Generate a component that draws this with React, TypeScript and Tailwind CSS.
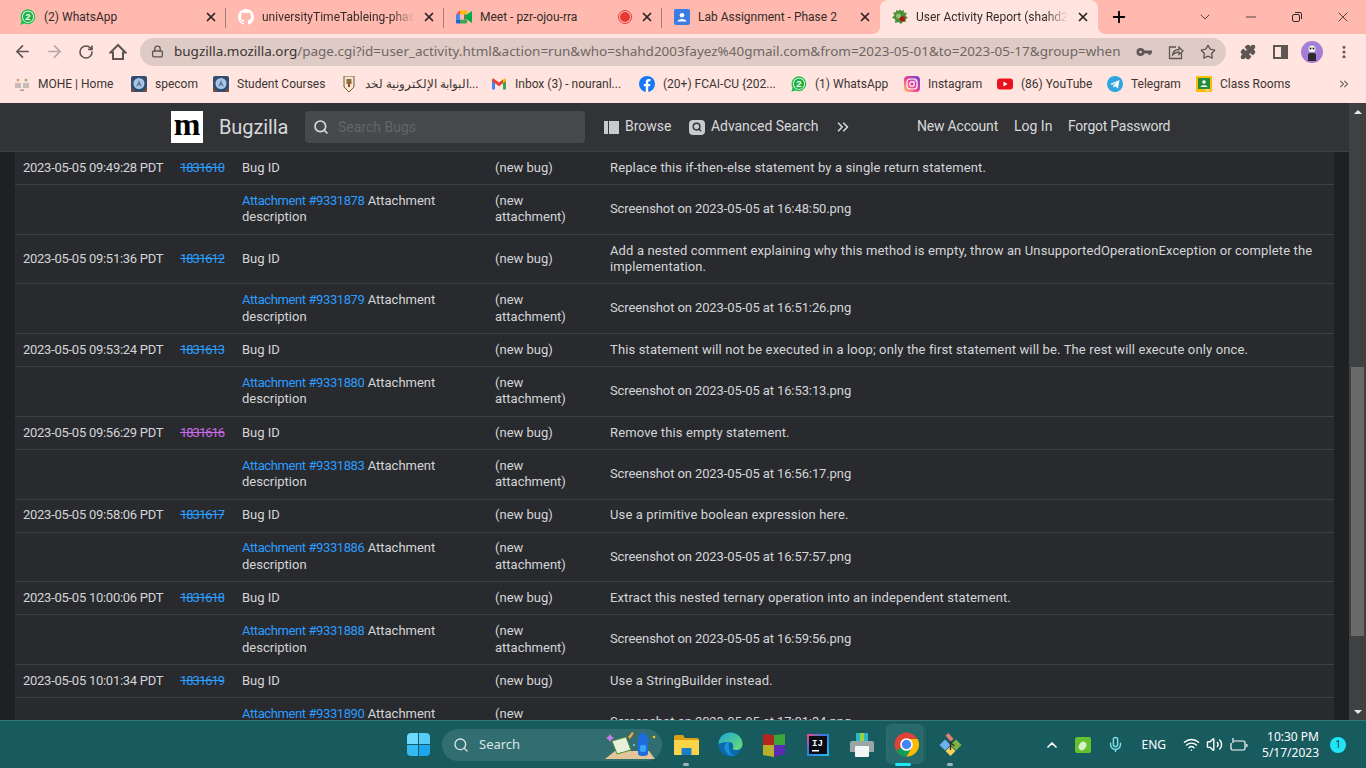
import {
  ArrowLeft,
  ArrowRight,
  ChevronDown,
  ChevronUp,
  ChevronsRight,
  EllipsisVertical,
  Lock,
  Mic,
  Minus,
  Plus,
  Puzzle,
  RotateCw,
  Search,
  Star,
  Volume2,
  Wifi,
  X,
} from "lucide-react";

type Row = {
  when: string;
  bug: string;
  visited?: boolean;
  summary: string;
  attachment: string;
  file: string;
};

const rows: Row[] = [
  { when: "2023-05-05 09:49:28 PDT", bug: "1831610", summary: "Replace this if-then-else statement by a single return statement.", attachment: "9331878", file: "Screenshot on 2023-05-05 at 16:48:50.png" },
  { when: "2023-05-05 09:51:36 PDT", bug: "1831612", summary: "Add a nested comment explaining why this method is empty, throw an UnsupportedOperationException or complete the implementation.", attachment: "9331879", file: "Screenshot on 2023-05-05 at 16:51:26.png" },
  { when: "2023-05-05 09:53:24 PDT", bug: "1831613", summary: "This statement will not be executed in a loop; only the first statement will be. The rest will execute only once.", attachment: "9331880", file: "Screenshot on 2023-05-05 at 16:53:13.png" },
  { when: "2023-05-05 09:56:29 PDT", bug: "1831616", visited: true, summary: "Remove this empty statement.", attachment: "9331883", file: "Screenshot on 2023-05-05 at 16:56:17.png" },
  { when: "2023-05-05 09:58:06 PDT", bug: "1831617", summary: "Use a primitive boolean expression here.", attachment: "9331886", file: "Screenshot on 2023-05-05 at 16:57:57.png" },
  { when: "2023-05-05 10:00:06 PDT", bug: "1831618", summary: "Extract this nested ternary operation into an independent statement.", attachment: "9331888", file: "Screenshot on 2023-05-05 at 16:59:56.png" },
  { when: "2023-05-05 10:01:34 PDT", bug: "1831619", summary: "Use a StringBuilder instead.", attachment: "9331890", file: "Screenshot on 2023-05-05 at 17:01:34.png" },
];

/* ---- favicons ---- */

function WhatsAppIcon() {
  return (
    <svg width="16" height="16" viewBox="0 0 16 16" className="shrink-0">
      <path d="M8 .3a7.500 7.500 0 0 0-6.500 11.200L.4 15.700l4.200-1.100A7.500 7.500 0 1 0 8 .3z" fill="#25c04f" />
      <circle cx="8" cy="7.800" r="6" fill="#fff" />
      <circle cx="8" cy="7.800" r="5.200" fill="#1fb141" />
      <text x="8" y="11.200" textAnchor="middle" fontSize="9.500" fontWeight="700" fill="#fff" fontFamily="Liberation Sans">2</text>
    </svg>
  );
}

function GitHubIcon() {
  return (
    <svg width="16" height="16" viewBox="0 0 16 16" fill="#fff" className="shrink-0">
      <path d="M8 0C3.58 0 0 3.58 0 8c0 3.54 2.29 6.53 5.47 7.59.4.07.55-.17.55-.38 0-.19-.01-.82-.01-1.49-2.01.37-2.53-.49-2.69-.94-.09-.23-.48-.94-.82-1.13-.28-.15-.68-.52-.01-.53.63-.01 1.08.58 1.23.82.72 1.21 1.87.87 2.33.66.07-.52.28-.87.51-1.07-1.78-.2-3.64-.89-3.64-3.95 0-.87.31-1.59.82-2.15-.08-.2-.36-1.02.08-2.12 0 0 .67-.21 2.2.82.64-.18 1.32-.27 2-.27s1.36.09 2 .27c1.53-1.04 2.2-.82 2.2-.82.44 1.1.16 1.92.08 2.12.51.56.82 1.27.82 2.15 0 3.07-1.87 3.75-3.65 3.95.29.25.54.73.54 1.48 0 1.07-.01 1.93-.01 2.2 0 .21.15.46.55.38A8.01 8.01 0 0 0 16 8c0-4.42-3.58-8-8-8z" />
    </svg>
  );
}

function MeetIcon() {
  return (
    <svg width="16" height="16" viewBox="0 0 16 16" className="shrink-0">
      <path d="M0 5.500l4-4v4z" fill="#ea4335" />
      <rect x="0" y="5.500" width="4" height="5" fill="#4285f4" />
      <path d="M0 10.500h4v4H1a1 1 0 0 1-1-1z" fill="#1967d2" />
      <path d="M4 1.500h6a1 1 0 0 1 1 1v3H4z" fill="#fbbc04" />
      <path d="M4 10.500h7v3a1 1 0 0 1-1 1H4z" fill="#34a853" />
      <path d="M11 5.500L16 2v12l-5-3.500z" fill="#00ac47" />
      <rect x="4" y="5.500" width="7" height="5" fill="#ffb9af" />
      <path d="M8 5.500h3v5H8z" fill="#188038" opacity=".8" />
    </svg>
  );
}

function ClassroomIcon() {
  return (
    <svg width="16" height="16" viewBox="0 0 16 16" className="shrink-0">
      <rect width="16" height="16" rx="1" fill="#fbbc04" />
      <rect x="2" y="2" width="12" height="11" fill="#1e8e3e" />
      <circle cx="8" cy="6" r="1.800" fill="#fff" />
      <path d="M4.500 11c.5-2.500 6.500-2.500 7 0z" fill="#fff" />
      <rect x="9.500" y="13.500" width="4" height="1" fill="#fff" />
    </svg>
  );
}

function LabIcon() {
  return (
    <svg width="16" height="16" viewBox="0 0 16 16" className="shrink-0">
      <rect width="16" height="16" rx="2" fill="#3b7ce4" />
      <circle cx="8" cy="6.300" r="2.300" fill="#fff" />
      <path d="M3.500 12.500c.4-3.400 8.600-3.400 9 0z" fill="#fff" />
    </svg>
  );
}

function BugIcon() {
  return (
    <svg width="16" height="16" viewBox="0 0 16 16" className="shrink-0">
      <path d="M8 0l1.300 2L12 1l-.3 2.500L15 4l-1.500 2.500L16 9l-2.500 1 .5 3-3-.3L9 15 6.500 13 3 14l.3-3.500L0 8.500l2.500-2L1 3.500l3-.2L4.500 1 7 2z" fill="#4e8f3a" />
      <circle cx="6.500" cy="7" r="2.500" fill="#8fc46e" />
      <path d="M7.500 10a3 3 0 0 1 5-2c1.500 1.500.5 4-1.500 4.500-2 .5-3.500-1-3.500-2.500z" fill="#b3121d" />
    </svg>
  );
}

function MoheIcon() {
  return (
    <svg width="16" height="16" viewBox="0 0 16 16" className="shrink-0">
      <circle cx="4" cy="4" r="1.500" fill="#d9a273" />
      <circle cx="12" cy="4" r="1.500" fill="#9bb58f" />
      <rect x="1" y="7" width="6" height="5" fill="#c7bcb8" />
      <rect x="9" y="7" width="6" height="5" fill="#c7bcb8" />
      <rect x="6" y="13.500" width="4" height="1.500" fill="#a89c98" />
    </svg>
  );
}

function CuIcon() {
  return (
    <svg width="16" height="16" viewBox="0 0 16 16" className="shrink-0">
      <rect width="16" height="16" rx="2" fill="#314d70" />
      <circle cx="8" cy="7.500" r="5.500" fill="#a9c7e4" />
      <path d="M5 11l3-7 3 7-3-2z" fill="#5d7da0" />
      <path d="M0 11l4 5H0zM16 11l-4 5h4z" fill="#8a4b32" />
    </svg>
  );
}

function CrestIcon() {
  return (
    <svg width="16" height="16" viewBox="0 0 16 16" className="shrink-0">
      <path d="M3 0h10v11l-5 5-5-5z" fill="#f2e8d0" stroke="#6b5b3a" />
      <rect x="5.500" y="3" width="5" height="5" fill="#8a6d3b" />
      <rect x="7" y="8" width="2" height="3" fill="#b2342a" />
    </svg>
  );
}

function GmailIcon() {
  return (
    <svg width="16" height="16" viewBox="0 0 16 16" className="shrink-0">
      <path d="M1 13.500V4l3 2v7.500H2a1 1 0 0 1-1-1z" fill="#4285f4" />
      <path d="M15 13.500V4l-3 2v7.500h2a1 1 0 0 0 1-1z" fill="#34a853" />
      <path d="M1 4c0-1.200 1.300-1.800 2.200-1.100L8 6.500l4-3v3.800L8 10.300 1 5z" fill="#ea4335" />
      <path d="M12 3.500l.8-.6C13.700 2.200 15 2.800 15 4v1l-3 2.300z" fill="#fbbc04" />
    </svg>
  );
}

function FacebookIcon() {
  return (
    <svg width="16" height="16" viewBox="0 0 16 16" className="shrink-0">
      <circle cx="8" cy="8" r="8" fill="#1877f2" />
      <path d="M11 10.200l.4-2.300H9.200V6.400c0-.6.300-1.200 1.300-1.200h1V3.200s-.9-.2-1.800-.2C7.900 3 6.800 4.100 6.800 6v1.900h-2v2.300h2V16h2.400v-5.800z" fill="#fff" />
    </svg>
  );
}

function InstagramIcon() {
  return (
    <svg width="16" height="16" viewBox="0 0 16 16" className="shrink-0">
      <defs>
        <linearGradient id="ig" x1="0" y1="1" x2="1" y2="0">
          <stop offset="0" stopColor="#feda75" />
          <stop offset=".4" stopColor="#f5468a" />
          <stop offset="1" stopColor="#7b3bd6" />
        </linearGradient>
      </defs>
      <rect width="16" height="16" rx="4" fill="url(#ig)" />
      <rect x="3" y="3" width="10" height="10" rx="3" fill="none" stroke="#fff" strokeWidth="1.200" />
      <circle cx="8" cy="8" r="2.300" fill="none" stroke="#fff" strokeWidth="1.200" />
      <circle cx="11" cy="5" r=".7" fill="#fff" />
    </svg>
  );
}

function YouTubeIcon() {
  return (
    <svg width="16" height="16" viewBox="0 0 16 16" className="shrink-0">
      <rect y="2.500" width="16" height="11" rx="3" fill="#e8121a" />
      <path d="M6.500 5.500v5l4-2.500z" fill="#fff" />
    </svg>
  );
}

function TelegramIcon() {
  return (
    <svg width="16" height="16" viewBox="0 0 16 16" className="shrink-0">
      <circle cx="8" cy="8" r="8" fill="#2ca5e0" />
      <path d="M3 8l9.500-4-1.500 8.500-3-2.200-1.500 1.500-.3-2.500 4.300-3.800-5.300 3.300z" fill="#fff" />
    </svg>
  );
}

/* ---- chrome ---- */

function Tab({
  icon,
  title,
  extra,
  fade,
  active,
  divider,
}: {
  icon: React.ReactNode;
  title: string;
  extra?: React.ReactNode;
  fade?: boolean;
  active?: boolean;
  divider?: boolean;
}) {
  return (
    <div className={`relative flex h-[34px] w-[218px] shrink-0 items-center gap-2 pr-2 pl-3 ${active ? "rounded-t-lg bg-[#ffe4df]" : ""}`}>
      {active && (
        <>
          <div className="absolute bottom-0 left-[-8px] h-2 w-2 bg-[radial-gradient(circle_at_0_0,transparent_8px,#ffe4df_8px)]" />
          <div className="absolute right-[-8px] bottom-0 h-2 w-2 bg-[radial-gradient(circle_at_100%_0,transparent_8px,#ffe4df_8px)]" />
        </>
      )}
      {icon}
      <span className={`min-w-0 flex-1 overflow-hidden text-[12px] whitespace-nowrap text-[#352c2a] ${fade ? "[mask-image:linear-gradient(to_right,#000_85%,transparent)]" : ""}`}>
        {title}
      </span>
      {extra}
      <X size={14} strokeWidth={3} className="shrink-0 text-[#2a2523]" />
      {divider && <div className="absolute top-[8px] right-0 h-[20px] w-px bg-[#9c7f79]" />}
    </div>
  );
}

function ToolbarSlot({ children }: { children: React.ReactNode }) {
  return <div className="flex h-8 w-8 shrink-0 items-center justify-center">{children}</div>;
}

function Bookmark({ icon, label, width }: { icon: React.ReactNode; label: string; width: string }) {
  return (
    <div className={`flex shrink-0 items-center gap-2 whitespace-nowrap ${width}`}>
      {icon}
      <span className="text-[12px] text-[#3b3533]">{label}</span>
    </div>
  );
}

function ActivityRow({ row }: { row: Row }) {
  const grid = "grid grid-cols-[157px_62px_253px_115px_1fr] items-center border-b border-[#3e3f42] pt-[7.75px] pb-[7.875px]";
  return (
    <>
      <div className={grid}>
        <div className="pl-2 whitespace-nowrap tracking-[-0.27px]">{row.when}</div>
        <div className={`pl-2 tracking-[-1px] line-through ${row.visited ? "text-[#c86be6]" : "text-[#2a9dff]"}`}>{row.bug}</div>
        <div className="pl-2">Bug ID</div>
        <div className="pl-2">(new bug)</div>
        <div className="px-2 tracking-[0.13px]">{row.summary}</div>
      </div>
      <div className={grid}>
        <div />
        <div />
        <div className="px-2">
          <span className="tracking-[-0.4px] text-[#2a9dff]">Attachment #{row.attachment}</span> Attachment description
        </div>
        <div className="pr-8 pl-2">(new attachment)</div>
        <div className="px-2 tracking-[-0.1px]">{row.file}</div>
      </div>
    </>
  );
}

function Scrollbar() {
  return (
    <div className="relative flex w-[17px] shrink-0 flex-col bg-[#3f4041]">
      <div className="flex h-[17px] items-center justify-center">
        <div className="border-x-[4px] border-b-[4px] border-x-transparent border-b-[#e8e8e8]" />
      </div>
      <div className="mx-[2px] mt-[247px] h-[269px] bg-[#6a6a6b]" />
      <div className="absolute right-0 bottom-0 left-0 flex h-[17px] items-center justify-center">
        <div className="border-x-[4px] border-t-[4px] border-x-transparent border-t-[#e8e8e8]" />
      </div>
    </div>
  );
}

function TaskSlot({ children, dot, active }: { children: React.ReactNode; dot?: boolean; active?: boolean }) {
  return (
    <div className="relative flex h-12 w-[44px] shrink-0 items-center justify-center">
      {active && (
        <>
          <div className="absolute top-[3px] left-[5px] h-[40px] w-[37px] rounded-md bg-[#21625f]" />
          <div className="absolute top-[3px] left-[2px] h-[40px] w-[37px] rounded-md border border-[#2f6f72] bg-[#28696c]" />
        </>
      )}
      <div className="relative">{children}</div>
      {dot && <div className="absolute bottom-[3px] h-[3px] w-[6px] rounded-full bg-[#9fb4b6]" />}
      {active && <div className="absolute bottom-[3px] left-[11px] h-[3px] w-[16px] rounded-full bg-[#20e5f5]" />}
    </div>
  );
}

function Taskbar() {
  return (
    <div className="relative flex h-12 shrink-0 items-center border-t border-[#33787b] bg-[#185b5e] pl-[396px] font-['Noto_Sans',sans-serif]">
      <TaskSlot>
        <div className="grid h-[23px] w-[23px] grid-cols-2 gap-px">
          <div className="rounded-tl-sm bg-[#6fd9fb]" />
          <div className="rounded-tr-sm bg-[#55cdf8]" />
          <div className="rounded-bl-sm bg-[#35bbf3]" />
          <div className="rounded-br-sm bg-[#1da6ee]" />
        </div>
      </TaskSlot>
      <div className="relative ml-[2px] flex h-8 w-[220px] shrink-0 items-center rounded-full bg-[#326e71] pl-[11px] text-[13px] text-[#d8e6e6]">
        <Search size={16} className="mr-[10px]" />
        Search
        <svg width="56" height="32" viewBox="0 0 56 32" className="absolute top-0 right-[2px]">
          <path d="M1 30l10-8h34l6 8z" fill="#e3c698" />
          <path d="M8 12l14-4 5 13-14 4z" fill="#e8f0dc" stroke="#4f8f3a" />
          <path d="M24 8l4-5 2 1-4 6z" fill="#f2a33a" />
          <path d="M6 5l1.500 2.500L10 9l-2.500 1.500L6 13l-1.500-2.500L2 9l2.500-1.500z" fill="#c77df0" />
          <path d="M34 24V12c0-4 2-7 5-9 3 2 5 5 5 9v12c0 2-1 3-5 3s-5-1-5-3z" fill="#1f6be0" />
          <rect x="36" y="16" width="6" height="7" rx="2" fill="#37a6f5" />
          <circle cx="50" cy="8" r="1.300" fill="#f5c518" />
          <circle cx="30" cy="16" r="1" fill="#6fd9fb" />
        </svg>
      </div>
      <div className="ml-[2px] flex items-center">
        <TaskSlot dot>
          <svg width="25" height="25" viewBox="0 0 25 25"><path d="M0 5a2 2 0 0 1 2-2h7l2 3h12a2 2 0 0 1 2 2v15H0z" fill="#d9a017" /><path d="M0 8h25v14a1 1 0 0 1-1 1H1a1 1 0 0 1-1-1z" fill="#fbd44a" /><rect x="7.500" y="16" width="10" height="7" rx="1" fill="#1c7fc6" /></svg>
        </TaskSlot>
        <TaskSlot>
          <svg width="25" height="25" viewBox="0 0 25 25">
            <defs>
              <linearGradient id="edge" x1="0" y1="0" x2="1" y2="1"><stop offset="0" stopColor="#1ca7d8" /><stop offset="1" stopColor="#6ee06a" /></linearGradient>
            </defs>
            <circle cx="12.500" cy="12.500" r="12" fill="#0b69b0" />
            <path d="M.5 12C1 4 7 .5 12.500.5 19 .5 24.500 5.500 24.500 12c0 4-3.500 6-6.500 6-2 0-3.500-1-3.500-1.500 2-2 .5-6.500-3.500-6.500C6 10 1.500 11 .5 12z" fill="url(#edge)" />
            <path d="M11 10c-4 0-6 4-3.500 9 2 4 6 5.500 9.500 5-5-1-7-7-6-14z" fill="#1992d4" />
          </svg>
        </TaskSlot>
        <TaskSlot>
          <svg width="24" height="26" viewBox="0 0 24 26"><path d="M1 2l11 1v10H1z" fill="#b3261e" /><path d="M12 3l11-1v11H12z" fill="#3ba53b" /><path d="M1 13h11v12l-11-2z" fill="#b9b02a" /><path d="M12 13h11v9l-11 3z" fill="#5b2bb5" /></svg>
        </TaskSlot>
        <TaskSlot>
          <svg width="22" height="22" viewBox="0 0 22 22">
            <defs>
              <linearGradient id="ij" x1="0" y1="0" x2="1" y2="1"><stop offset="0" stopColor="#f0478c" /><stop offset=".4" stopColor="#2f7be0" /><stop offset="1" stopColor="#27b7f0" /></linearGradient>
            </defs>
            <rect x="1" y="1" width="20" height="20" fill="#0b0b14" stroke="url(#ij)" strokeWidth="2" />
            <rect x="5" y="16" width="7" height="1.500" fill="#fff" />
            <text x="5" y="12" fontSize="9" fontWeight="700" fill="#fff" fontFamily="Liberation Mono">IJ</text>
          </svg>
        </TaskSlot>
        <TaskSlot>
          <svg width="26" height="26" viewBox="0 0 26 26"><rect x="7" y="1" width="12" height="8" fill="#2ab6c9" /><rect x="11" y="1" width="4" height="8" fill="#9fcf3a" /><path d="M1 11a2 2 0 0 1 2-2h20a2 2 0 0 1 2 2v9H1z" fill="#9aa5a8" /><rect x="6" y="14" width="14" height="11" rx="1" fill="#f4f6f6" /></svg>
        </TaskSlot>
        <TaskSlot active>
          <svg width="25" height="25" viewBox="0 0 25 25"><circle cx="12.500" cy="12.500" r="12" fill="#db4437" /><path d="M12.500 12.500L2.100 18.500A12 12 0 0 0 12.500 24.500l4-6z" fill="#0f9d58" /><path d="M12.500 7h11.200a12 12 0 0 1-11.200 17.500l5-8z" fill="#fbbc04" /><circle cx="12.500" cy="12.500" r="5.500" fill="#4285f4" stroke="#fff" strokeWidth="1.600" /></svg>
        </TaskSlot>
        <TaskSlot dot>
          <svg width="25" height="25" viewBox="0 0 25 25">
            <path d="M7 7.500l5.500 5.500L7 18.500 1.500 13z" fill="#6ab0f3" />
            <path d="M7.500 3.500l3-2.500 5 6-3 2.500z" fill="#e87d6e" />
            <path d="M18 7.500l5.500 5.500-5.500 5.500-5.500-5.500z" fill="#7cb342" />
            <path d="M12.500 14l5 5-5 5-5-5z" fill="#f2d15c" />
            <path d="M12.500 9v9M12.500 11l4 3" stroke="#3a2f2d" strokeWidth="1.400" fill="none" />
          </svg>
        </TaskSlot>
      </div>
      <div className="ml-auto flex items-center text-white">
        <ChevronUp size={16} strokeWidth={2.5} />
        <svg width="16" height="16" viewBox="0 0 16 16" className="ml-[15px]"><rect width="16" height="16" rx="2" fill="#63c22e" /><ellipse cx="7.500" cy="9" rx="3.500" ry="4.500" transform="rotate(35 7.500 9)" fill="#dbeecb" /></svg>
        <Mic size={17} className="ml-[16px] text-[#7ee0e8]" />
        <span className="ml-[17px] text-[12px]">ENG</span>
        <Wifi size={17} className="ml-[17px]" />
        <Volume2 size={17} className="ml-[6px]" />
        <svg width="18" height="16" viewBox="0 0 18 16" fill="none" stroke="#fff" strokeWidth="1.200" className="ml-[7px]"><path d="M4 4h9.500A1.500 1.500 0 0 1 15 5.500v6a1.500 1.500 0 0 1-1.500 1.500h-11A1.500 1.500 0 0 1 1 11.500V6" /><path d="M16.800 7v3" /><path d="M3 1v5" /></svg>
        <div className="ml-[14px] text-right text-[12px] leading-[16px]">
          <div>10:30 PM</div>
          <div>5/17/2023</div>
        </div>
        <div className="mr-[20px] ml-[11px] flex h-4 w-4 items-center justify-center rounded-full bg-[#20e5f5] text-[10px] text-[#10343a]">1</div>
      </div>
    </div>
  );
}

export default function App() {
  return (
    <div className="flex h-screen w-[1366px] flex-col overflow-hidden bg-[#1f2022] font-['Roboto',sans-serif]">
      {/* tab strip */}
      <div className="flex h-[34px] shrink-0 items-center bg-[#ffb9af] pl-2">
        <Tab icon={<WhatsAppIcon />} title="(2) WhatsApp" divider />
        <Tab icon={<GitHubIcon />} title="universityTimeTableing-phase" fade divider />
        <Tab icon={<MeetIcon />} title="Meet - pzr-ojou-rra" divider extra={<span className="flex h-3.5 w-3.5 shrink-0 items-center justify-center rounded-full border border-[#e53935]"><span className="h-2.5 w-2.5 rounded-full bg-[#e53935]" /></span>} />
        <Tab icon={<LabIcon />} title="Lab Assignment - Phase 2" />
        <Tab active icon={<BugIcon />} title="User Activity Report (shahd2003" fade />
        <Plus size={18} strokeWidth={2.5} className="ml-3 text-black" />
        <div className="ml-[69px] flex items-center gap-[30px] text-[#332d2b]">
          <ChevronDown size={16} strokeWidth={1.25} />
          <Minus size={16} strokeWidth={1.25} />
          <svg width="16" height="16" viewBox="0 0 16 16" fill="none" stroke="currentColor"><rect x="3.500" y="5.500" width="7" height="7" rx="1.500" /><path d="M6 3.500h5a1.500 1.500 0 0 1 1.500 1.500v5" /></svg>
          <X size={16} strokeWidth={1.25} />
        </div>
      </div>

      {/* toolbar */}
      <div className="flex h-[35px] shrink-0 items-center bg-[#ffe4df] pl-[6px] text-[#5f5654]">
        <ToolbarSlot><ArrowLeft size={19} strokeWidth={2.2} /></ToolbarSlot>
        <ToolbarSlot><ArrowRight size={19} strokeWidth={2.2} className="text-[#b5a8a5]" /></ToolbarSlot>
        <ToolbarSlot><RotateCw size={16} strokeWidth={2.4} /></ToolbarSlot>
        <ToolbarSlot>
          <svg width="18" height="18" viewBox="0 0 18 18" fill="none" stroke="currentColor" strokeWidth="2"><path d="M1.500 9.500L9 2l7.500 7.500H14V16H4V9.500z" /></svg>
        </ToolbarSlot>
        <div className="ml-[6px] flex h-7 w-[1086px] shrink-0 items-center rounded-full bg-[#dfcbc6] pr-[2px] pl-[11px]">
          <Lock size={13} strokeWidth={2.5} className="mr-[10px] shrink-0" />
          <span className="min-w-0 flex-1 overflow-hidden font-['Noto_Sans',sans-serif] text-[13.47px] whitespace-nowrap text-[#3a3432]">
            bugzilla.mozilla.org<span className="text-[#6f6664]">/page.cgi?id=user_activity.html&amp;action=run&amp;who=shahd2003fayez%40gmail.com&amp;from=2023-05-01&amp;to=2023-05-17&amp;group=when</span>
          </span>
          <ToolbarSlot>
            <svg width="16" height="10" viewBox="0 0 16 10" fill="currentColor"><circle cx="4.500" cy="5" r="4" /><circle cx="4.500" cy="5" r="1.300" fill="#dfcbc6" /><path d="M8 3.500h8v3h-1.500V8h-2V6.500H8z" /></svg>
          </ToolbarSlot>
          <ToolbarSlot>
            <svg width="16" height="16" viewBox="0 0 16 16" fill="none" stroke="currentColor" strokeWidth="1.300"><path d="M8 3H1.500v11.500h12V9" /><path d="M4.500 11c.5-3.500 3-5.500 6.500-5.500V3l4 4-4 3.500V8c-2.500 0-4.500 1-6.500 3z" /></svg>
          </ToolbarSlot>
          <ToolbarSlot><Star size={16} strokeWidth={2} /></ToolbarSlot>
        </div>
        <div className="ml-[6px] flex">
          <ToolbarSlot><Puzzle size={16} fill="currentColor" /></ToolbarSlot>
          <ToolbarSlot><div className="h-[14px] w-[15px] border-2 border-r-[7px] border-[#5f5654]" /></ToolbarSlot>
          <ToolbarSlot>
            <svg width="22" height="22" viewBox="0 0 22 22"><circle cx="11" cy="11" r="11" fill="#a67ed8" /><circle cx="11" cy="8" r="3.500" fill="#f1f1f1" /><path d="M7 20v-6c0-3 8-3 8 0v6z" fill="#2c2a2e" /><circle cx="9.500" cy="7.500" r="1" fill="#222" /><circle cx="12.500" cy="7.500" r="1" fill="#222" /></svg>
          </ToolbarSlot>
          <ToolbarSlot><EllipsisVertical size={16} strokeWidth={2.6} /></ToolbarSlot>
        </div>
      </div>

      {/* bookmarks */}
      <div className="flex h-[30px] shrink-0 items-center bg-[#ffe4df] pl-[14px]">
        <Bookmark width="w-[117px]" icon={<MoheIcon />} label="MOHE | Home" />
        <Bookmark width="w-[82px]" icon={<CuIcon />} label="specom" />
        <Bookmark width="w-[128px]" icon={<CuIcon />} label="Student Courses" />
        <Bookmark width="w-[150px]" icon={<CrestIcon />} label="البوابة الإلكترونية لخد..." />
        <Bookmark width="w-[148px]" icon={<GmailIcon />} label="Inbox (3) - nouranl..." />
        <Bookmark width="w-[152px]" icon={<FacebookIcon />} label="(20+) FCAI-CU {202..." />
        <Bookmark width="w-[113px]" icon={<WhatsAppIcon />} label="(1) WhatsApp" />
        <Bookmark width="w-[93px]" icon={<InstagramIcon />} label="Instagram" />
        <Bookmark width="w-[110px]" icon={<YouTubeIcon />} label="(86) YouTube" />
        <Bookmark width="w-[89px]" icon={<TelegramIcon />} label="Telegram" />
        <Bookmark width="w-[120px]" icon={<ClassroomIcon />} label="Class Rooms" />
        <ChevronsRight size={14} className="ml-[21px] text-[#6b6260]" />
      </div>
      <div className="h-[4px] shrink-0 bg-[#ffe4df]" />

      {/* page + scrollbar */}
      <div className="flex min-h-0 flex-1">
        <div className="flex min-w-0 flex-1 flex-col">
          <div className="flex h-[49px] shrink-0 items-center border-b border-[#3e3f42] bg-[#323336] pl-[171px] text-[#d6d9dc]">
            <div className="flex h-8 w-8 items-start justify-center bg-white font-['Liberation_Serif',serif] text-[32px] leading-[27px] font-bold text-black">m</div>
            <span className="ml-4 w-[70px] text-[20px] tracking-[-0.1px]">Bugzilla</span>
            <div className="ml-4 flex h-8 w-[280px] items-center rounded bg-[#48494c] pl-2 text-[14px] text-[#63656a]">
              <Search size={16} strokeWidth={2.5} className="mr-[9px] text-[#d6d9dc]" />
              Search Bugs
            </div>
            <svg width="15" height="13" viewBox="0 0 15 13" className="ml-[19px]"><rect width="4" height="13" fill="#c8cbce" /><rect x="5" width="10" height="13" fill="#c8cbce" /></svg>
            <span className="mb-[2px] ml-[6px] w-[46px] text-[14px] whitespace-nowrap">Browse</span>
            <div className="ml-[18px] flex h-[15px] w-[16px] items-center justify-center rounded-sm bg-[#c8cbce]">
              <Search size={10} strokeWidth={3.5} className="text-[#323336]" />
            </div>
            <span className="mb-[2px] ml-[6px] w-[107px] text-[14px] whitespace-nowrap tracking-[-0.05px]">Advanced Search</span>
            <ChevronsRight size={18} strokeWidth={2.2} className="ml-[16px]" />
            <span className="mb-[2px] ml-[65px] w-[81px] text-[14px] whitespace-nowrap tracking-[-0.2px]">New Account</span>
            <span className="mb-[2px] ml-[16px] w-[37px] text-[14px] whitespace-nowrap">Log In</span>
            <span className="mb-[2px] ml-[17px] text-[14px] whitespace-nowrap tracking-[-0.25px]">Forgot Password</span>
          </div>
          <div className="flex min-h-0 flex-1 overflow-hidden">
            <div className="mr-[15px] ml-[15px] min-w-0 flex-1 bg-[#292a2d] text-[13px] leading-[16.5px] text-[#d3d6d9]">
              {rows.map((row) => (
                <ActivityRow key={row.bug} row={row} />
              ))}
            </div>
          </div>
        </div>
        <Scrollbar />
      </div>

      <Taskbar />
    </div>
  );
}
